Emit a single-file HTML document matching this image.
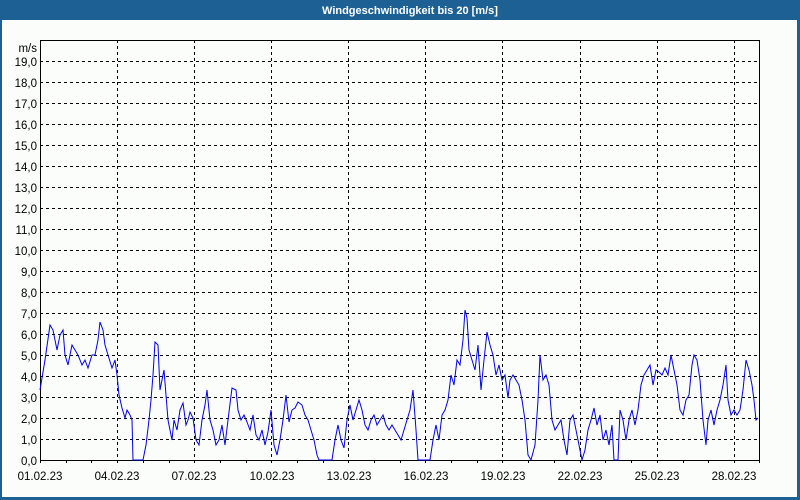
<!DOCTYPE html>
<html><head><meta charset="utf-8"><style>
html,body{margin:0;padding:0;width:800px;height:500px;overflow:hidden;background:#fbfdfb;}
svg{display:block;font-family:"Liberation Sans","DejaVu Sans",sans-serif;}
</style></head><body>
<svg width="800" height="500" viewBox="0 0 800 500">
<rect x="0" y="0" width="800" height="500" fill="#1d6194"/>
<rect x="2" y="20" width="795" height="477" fill="#fbfdfb"/>
<text x="410" y="14" fill="#fff" font-size="11" font-weight="bold" text-anchor="middle">Windgeschwindigkeit bis 20 [m/s]</text>
<g stroke="#000" stroke-width="1" stroke-dasharray="3,3" fill="none" shape-rendering="crispEdges">
<path d="M40 439.5H760M40 418.5H760M40 397.5H760M40 376.5H760M40 355.5H760M40 334.5H760M40 313.5H760M40 292.5H760M40 271.5H760M40 250.5H760M40 229.5H760M40 208.5H760M40 187.5H760M40 166.5H760M40 145.5H760M40 124.5H760M40 103.5H760M40 82.5H760M40 61.5H760"/>
<path d="M117.5 40V460M194.5 40V460M271.5 40V460M348.5 40V460M425.5 40V460M502.5 40V460M580.5 40V460M657.5 40V460M734.5 40V460"/>
</g>
<rect x="40.5" y="40.5" width="719" height="420" fill="none" stroke="#000" shape-rendering="crispEdges"/>
<g stroke="#000" shape-rendering="crispEdges">
<path d="M40.5 460v3M66.5 460v3M91.5 460v3M117.5 460v3M143.5 460v3M169.5 460v3M194.5 460v3M220.5 460v3M246.5 460v3M271.5 460v3M297.5 460v3M323.5 460v3M348.5 460v3M374.5 460v3M400.5 460v3M425.5 460v3M451.5 460v3M477.5 460v3M502.5 460v3M528.5 460v3M554.5 460v3M580.5 460v3M605.5 460v3M631.5 460v3M657.5 460v3M683.5 460v3M708.5 460v3M734.5 460v3M759.5 460v3"/>
</g>
<g font-size="11.5" fill="#000" text-anchor="end">
<text x="37" y="52">m/s</text>
<text x="37" y="66">19,0</text><text x="37" y="87">18,0</text><text x="37" y="108">17,0</text><text x="37" y="129">16,0</text><text x="37" y="150">15,0</text><text x="37" y="171">14,0</text><text x="37" y="192">13,0</text><text x="37" y="213">12,0</text><text x="37" y="234">11,0</text><text x="37" y="255">10,0</text><text x="37" y="276">9,0</text><text x="37" y="297">8,0</text><text x="37" y="318">7,0</text><text x="37" y="339">6,0</text><text x="37" y="360">5,0</text><text x="37" y="381">4,0</text><text x="37" y="402">3,0</text><text x="37" y="423">2,0</text><text x="37" y="444">1,0</text><text x="37" y="465">0,0</text>
</g>
<g font-size="11.5" fill="#000" text-anchor="middle">
<text x="40" y="480">01.02.23</text><text x="117" y="480">04.02.23</text><text x="194" y="480">07.02.23</text><text x="272" y="480">10.02.23</text><text x="349" y="480">13.02.23</text><text x="426" y="480">16.02.23</text><text x="503" y="480">19.02.23</text><text x="580" y="480">22.02.23</text><text x="657" y="480">25.02.23</text><text x="734" y="480">28.02.23</text>
</g>
<polyline fill="none" stroke="#0000ee" stroke-width="1" points="40,390 45,360 50,325 53,330 57,350 60,335 63,330 65,355 68,365 72,345 75,350 78,355 82,365 85,360 88,368 92,355 95,355 98,340 100,322 103,330 105,345 108,355 112,368 115,360 117,375 119,395 122,408 125,418 127,410 130,415 132,420 133,460 138,460 143,460 146,445 149,420 151,400 153,375 155,342 158,345 160,390 162,380 164,370 166,395 168,420 170,430 172,440 174,420 177,430 180,410 183,403 186,425 188,420 190,412 193,418 196,440 199,445 202,420 205,405 207,390 210,420 213,430 216,445 219,440 222,425 225,445 228,420 232,388 236,390 238,410 241,420 244,415 247,422 250,430 253,415 256,435 259,440 262,430 265,445 268,432 271,410 274,445 277,455 280,440 283,420 286,395 289,422 292,410 295,408 298,402 302,405 305,415 308,420 311,430 314,440 317,455 319,460 332,460 335,440 338,425 341,440 344,448 347,420 350,405 353,420 356,410 359,400 362,410 365,425 368,430 371,420 374,415 377,425 380,420 383,415 386,425 389,430 392,425 395,430 398,435 401,440 404,430 407,420 410,410 413,390 416,430 418,460 430,460 433,440 436,425 439,440 442,415 445,410 448,400 451,375 454,385 457,360 460,365 463,340 465,310 467,318 469,350 472,360 475,370 478,345 481,390 484,360 487,332 490,345 493,355 496,375 499,365 502,380 505,375 508,398 510,380 513,375 516,380 519,385 522,400 525,420 528,455 531,460 535,445 538,400 540,355 543,380 546,375 549,385 552,420 555,430 558,425 561,420 564,440 567,455 570,420 573,415 576,430 579,445 582,460 585,450 588,430 591,420 594,408 597,425 600,415 603,440 606,430 609,445 612,425 614,460 618,460 620,410 623,420 626,440 629,420 632,410 635,425 638,410 641,385 644,375 647,370 650,365 653,385 656,370 659,372 662,375 665,368 668,375 671,355 674,370 677,385 680,410 683,415 686,400 689,395 692,365 694,355 697,360 700,380 703,420 706,445 708,420 711,410 714,425 717,410 720,400 723,385 726,365 728,400 731,415 734,410 737,415 740,410 743,390 746,360 749,370 752,385 754,400 756,420 758,418"/>
</svg>
</body></html>
